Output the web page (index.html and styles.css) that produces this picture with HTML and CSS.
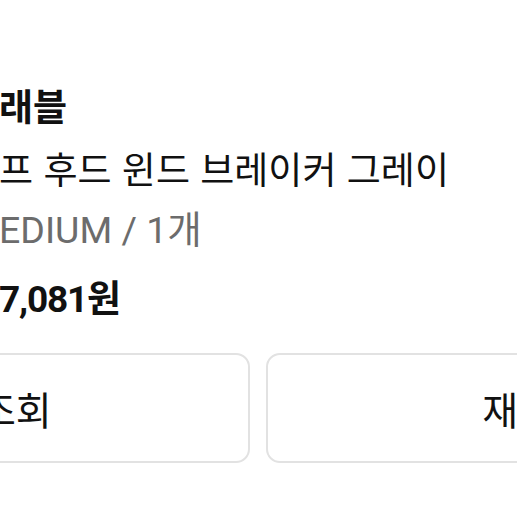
FILE: index.html
```html
<!DOCTYPE html>
<html lang="ko">
<head>
<meta charset="utf-8">
<link rel="stylesheet" href="styles.css">
</head>
<body>
<div class="screen">
  <div class="order">
    <div class="product">
      <div class="thumb"></div>
      <div class="info">
        <p class="brand">래블</p>
        <p class="name">프 후드 윈드 브레이커 그레이</p>
        <p class="option">EDIUM / 1개</p>
        <p class="price">7,081원</p>
      </div>
    </div>
    <div class="actions">
      <button class="btn">배송조회</button>
      <button class="btn">재구매</button>
    </div>
  </div>
</div>
</body>
</html>
```
FILE: styles.css
```css
html, body {
  margin: 0;
  padding: 0;
  background: #fff;
  overflow: hidden;
}
.screen {
  width: 517px;
  height: 517px;
  overflow: hidden;
  font-family: "Noto Sans CJK KR", sans-serif;
  color: #111;
}
.order {
  padding-top: 80px;
  margin-left: -290px;
  width: 1200px;
}
.product {
  display: flex;
}
.thumb {
  width: 250px;
  margin-right: 39px;
  flex: none;
}
.info p {
  margin: 0;
  line-height: 50px;
  white-space: nowrap;
}
.brand {
  font-size: 37px;
  font-weight: 700;
}
.name {
  font-size: 37px;
  margin-top: 13px !important;
}
.option {
  font-family: Roboto, "Noto Sans CJK KR", sans-serif;
  font-size: 37.5px;
  color: #6c6c6c;
  margin-top: 12px !important;
}
.price {
  font-family: Roboto, "Noto Sans CJK KR", sans-serif;
  font-size: 37px;
  font-weight: 700;
  letter-spacing: -1.2px;
  margin-top: 20px !important;
}
.actions {
  display: flex;
  gap: 16px;
  margin-top: 28px;
}
.btn {
  width: 540px;
  height: 110px;
  box-sizing: border-box;
  border: 2px solid #e2e2e2;
  border-radius: 14px;
  background: #fff;
  font-family: "Noto Sans CJK KR", sans-serif;
  font-size: 39px;
  color: #111;
  padding: 0;
}
```
